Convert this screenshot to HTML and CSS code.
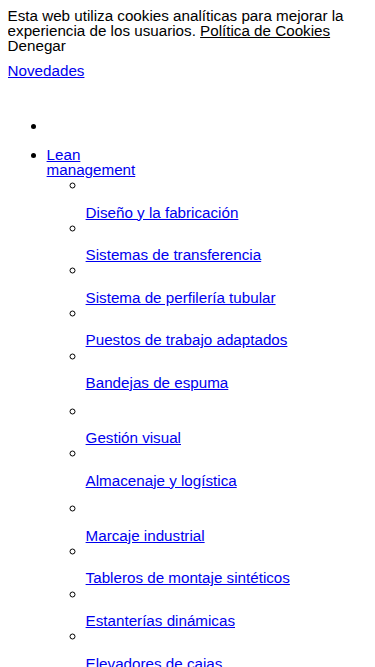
FILE: index.html
```html
<!DOCTYPE html>
<html lang="es">
<head>
    <meta charset="UTF-8">
    <meta name="viewport" content="width=device-width, initial-scale=1.0">
    <title>Novedades</title>
    <link rel="stylesheet" href="styles.css">
</head>
<body>

    <div class="cookies">
        <p class="cookies-text">Esta web utiliza cookies analíticas para mejorar la experiencia de los usuarios. <a href="#" class="cookies-link">Política de Cookies</a></p>
        <span class="cookies-deny">Denegar</span>
    </div>

    <a href="#" class="news-link">Novedades</a>

    <nav class="menu">
        <ul class="menu-list">
            <li class="menu-item"><span class="menu-logo"></span></li>
            <li class="menu-item">
                <a href="#" class="menu-link">Lean management</a>
                <ul class="submenu">
                    <li class="submenu-item"><span class="submenu-thumb"></span><a href="#" class="submenu-link">Diseño y la fabricación</a></li>
                    <li class="submenu-item"><span class="submenu-thumb"></span><a href="#" class="submenu-link">Sistemas de transferencia</a></li>
                    <li class="submenu-item"><span class="submenu-thumb"></span><a href="#" class="submenu-link">Sistema de perfilería tubular</a></li>
                    <li class="submenu-item"><span class="submenu-thumb"></span><a href="#" class="submenu-link">Puestos de trabajo adaptados</a></li>
                    <li class="submenu-item submenu-item-spaced"><span class="submenu-thumb"></span><a href="#" class="submenu-link">Bandejas de espuma</a></li>
                    <li class="submenu-item"><span class="submenu-thumb"></span><a href="#" class="submenu-link">Gestión visual</a></li>
                    <li class="submenu-item submenu-item-spaced"><span class="submenu-thumb"></span><a href="#" class="submenu-link">Almacenaje y logística</a></li>
                    <li class="submenu-item"><span class="submenu-thumb"></span><a href="#" class="submenu-link">Marcaje industrial</a></li>
                    <li class="submenu-item"><span class="submenu-thumb"></span><a href="#" class="submenu-link">Tableros de montaje sintéticos</a></li>
                    <li class="submenu-item"><span class="submenu-thumb"></span><a href="#" class="submenu-link">Estanterías dinámicas</a></li>
                    <li class="submenu-item"><span class="submenu-thumb"></span><a href="#" class="submenu-link">Elevadores de cajas</a></li>
                </ul>
            </li>
        </ul>
    </nav>

</body>
</html>
```

FILE: styles.css
```css
body {
    font-family: "Liberation Sans", Arial, sans-serif;
    font-size: 15.2px;
    line-height: 15.3px;
    color: #000;
    background-color: #fff;
    margin: 7.6px;
}

a {
    color: #0000ee;
}

.cookies-text {
    margin: 0;
}

.cookies-link {
    color: #000;
}

.cookies-deny {
    display: block;
}

.news-link {
    display: inline-block;
    margin-top: 9.6px;
}

.menu {
    padding-top: 40px;
}

.menu-list,
.submenu {
    margin: 0;
    padding-left: 39px;
}

.menu-list {
    list-style: disc;
}

.submenu {
    list-style: circle;
}

.menu-logo,
.submenu-thumb {
    display: inline-block;
}

.menu-link {
    display: block;
    width: 100px;
    margin-top: 13px;
}

.submenu-link {
    display: block;
    margin-top: 12px;
}

.submenu-item-spaced {
    margin-bottom: 12.5px;
}
```
